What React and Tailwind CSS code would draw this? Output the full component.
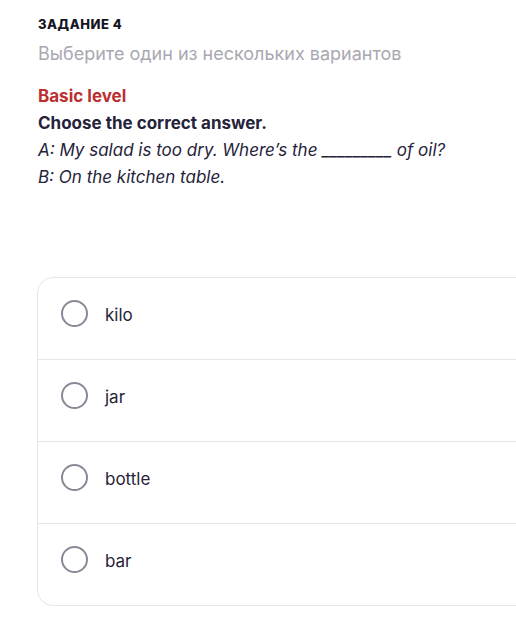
import React from "react";

const options = ["kilo", "jar", "bottle", "bar"];

function Radio() {
  return (
    <span className="block mt-[-0.5px] w-[27px] h-[27px] shrink-0 rounded-full border-[2.5px] border-[#8b8797] bg-white" />
  );
}

export default function App() {
  return (
    <div className="w-[516px] h-[618px] overflow-hidden bg-white" style={{ fontFamily: "Inter, 'Noto Sans', sans-serif" }}>
      <div className="pl-[38px] pt-[16px]">
        <div className="text-[13px] leading-[16px] font-extrabold text-[#16151f] tracking-[0.04em]">ЗАДАНИЕ 4</div>
        <div className="mt-[9.5px] text-[18px] leading-[24px] text-[#a9a8b2]">Выберите один из нескольких вариантов</div>
        <div className="mt-[17.5px] text-[17px] leading-[27px] font-bold text-[#bb2f31]">Basic level</div>
        <div className="text-[17px] leading-[27px] font-bold text-[#25233a]">Choose the correct answer.</div>
        <div className="text-[17px] leading-[27px] italic text-[#25233a]">
          A: My salad is too dry. Where’s the _________ of oil?
        </div>
        <div className="text-[17px] leading-[27px] italic text-[#25233a]">B: On the kitchen table.</div>
      </div>
      <div className="ml-[37px] mt-[86px] w-[520px] rounded-[16px] border border-[#e6e6ea] bg-white">
        {options.map((o, i) => (
          <div
            key={o}
            className={
              "flex items-start gap-[17px] pl-[23px] pt-[22px] " +
              (i < options.length - 1 ? "h-[82px] border-b border-[#e6e6ea]" : "h-[81px]")
            }
          >
            <Radio />
            <span className="mt-[2px] text-[17px] leading-[26px] text-[#272338]">{o}</span>
          </div>
        ))}
      </div>
    </div>
  );
}
